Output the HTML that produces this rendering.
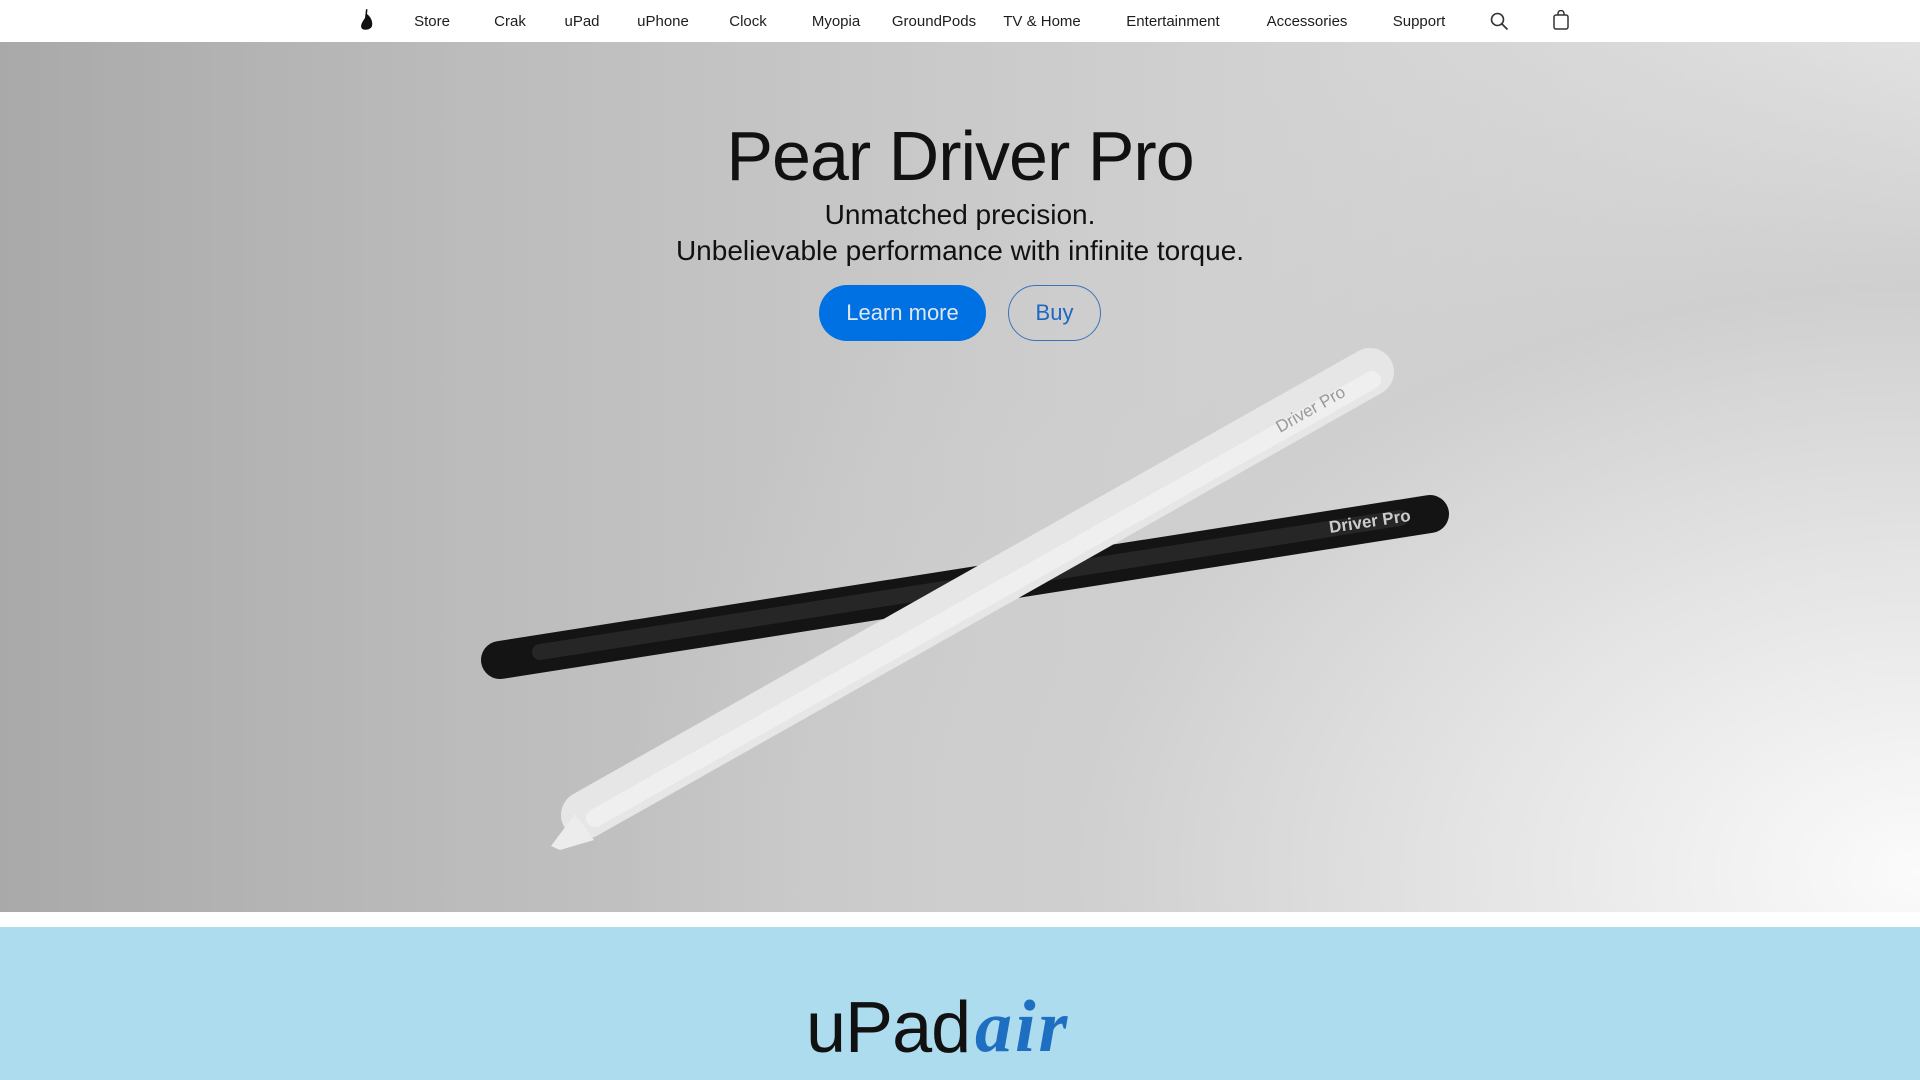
<!DOCTYPE html>
<html><head><meta charset="utf-8"><style>
*{margin:0;padding:0;box-sizing:border-box}
body{width:1920px;height:1080px;overflow:hidden;background:#fff;font-family:"Liberation Sans",sans-serif;position:relative}
nav{position:absolute;top:0;left:0;width:1920px;height:42px;background:#fff}
nav span{position:absolute;top:13px;font-size:15px;color:#1d1d1f;transform:translateX(-50%);white-space:nowrap}
.hero{position:absolute;top:42px;left:0;width:1920px;height:870px;background:radial-gradient(ellipse 1300px 900px at 1920px 830px,#fbfbfb 0%,#e4e4e4 35%,#cfcfcf 65%,rgba(200,200,200,0) 100%),linear-gradient(90deg,#a9a9a9 0%,#bcbcbc 25%,#cacaca 50%,#d8d8d8 80%,#e6e6e6 100%)}
h1{position:absolute;top:74px;width:1920px;text-align:center;font-size:70px;font-weight:400;color:#111;letter-spacing:-1px}
.sub{position:absolute;width:1920px;text-align:center;font-size:28px;color:#111}
.btn{position:absolute;top:243px;height:56px;border-radius:28px;font-size:22px;text-align:center;line-height:56px}
.blue{position:absolute;top:927px;left:0;width:1920px;height:153px;background:#acdcee}
</style></head><body>
<nav>
<svg style="position:absolute;left:360px;top:9px" width="14" height="22" viewBox="0 0 14 22"><path d="M6 0 L7.5 0.5 L7 5 C11 8 13 13 12 17 C11 21 3 22 1.5 19 C0 16 3 12 5 9 Z" fill="#111"/></svg>
<span style="left:432px">Store</span><span style="left:510px">Crak</span><span style="left:582px">uPad</span><span style="left:663px">uPhone</span><span style="left:748px">Clock</span><span style="left:836px">Myopia</span><span style="left:934px">GroundPods</span><span style="left:1042px">TV &amp; Home</span><span style="left:1173px">Entertainment</span><span style="left:1307px">Accessories</span><span style="left:1419px">Support</span>
<svg style="position:absolute;left:1490px;top:12px" width="19" height="19" viewBox="0 0 19 19"><circle cx="7.5" cy="7.5" r="6" fill="none" stroke="#333" stroke-width="1.6"/><line x1="12" y1="12" x2="17.5" y2="17.5" stroke="#333" stroke-width="1.7"/></svg>
<svg style="position:absolute;left:1553px;top:10px" width="16" height="20" viewBox="0 0 16 20"><rect x="1" y="5" width="14" height="14" rx="2" fill="none" stroke="#333" stroke-width="1.5"/><path d="M5 5 V3.5 A3 3 0 0 1 11 3.5 V5" fill="none" stroke="#333" stroke-width="1.5"/></svg>
</nav>
<div class="hero">
<h1>Pear Driver Pro</h1>
<div class="sub" style="top:157px">Unmatched precision.</div>
<div class="sub" style="top:193px">Unbelievable performance with infinite torque.</div>
<div class="btn" style="left:819px;width:167px;background:#0071e3;color:#dfe6ee">Learn more</div>
<div class="btn" style="left:1008px;width:93px;border:1px solid #3a74b8;color:#1f66c4;line-height:54px">Buy</div>
<svg style="position:absolute;left:0;top:0" width="1920" height="870" viewBox="0 42 1920 870">
<line x1="500" y1="660" x2="1430" y2="514" stroke="#141414" stroke-width="38" stroke-linecap="round"/>
<line x1="540" y1="652" x2="1400" y2="518" stroke="#333" stroke-width="16" stroke-linecap="round" opacity="0.6"/>
<text x="1330" y="533" font-size="17" font-weight="bold" fill="#ccc" transform="rotate(-8.5 1330 533)">Driver Pro</text>
<line x1="585" y1="815" x2="1370" y2="372" stroke="#e6e6e6" stroke-width="48" stroke-linecap="round"/>
<line x1="595" y1="818" x2="1372" y2="380" stroke="#f3f3f3" stroke-width="18" stroke-linecap="round" opacity="0.7"/>
<polygon points="551,846 575,814 594,840 560,850" fill="#ececec"/>
<text x="1280" y="433" font-size="17" fill="#999" transform="rotate(-29.5 1280 433)">Driver Pro</text>
</svg>
</div>
<div class="blue">
<div style="position:absolute;left:806px;top:60px;font-size:72px;color:#111;letter-spacing:-1px">uPad</div>
<div style="position:absolute;left:975px;top:58px;font-size:74px;font-style:italic;font-weight:bold;font-family:'Liberation Serif',serif;color:#1e6fc2;letter-spacing:3px">air</div>
</div>
</body></html>
